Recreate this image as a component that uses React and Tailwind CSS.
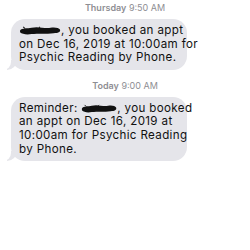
import React from "react";

const Redacted = ({ w }) => (
  <svg width={w} height="9" viewBox="0 0 40 10" className="inline-block align-[-1px]" preserveAspectRatio="none">
    <path d="M1 5 C3 2 8 3 12 2 C18 0 24 3 30 2 C34 1 38 2 39 4 C40 7 37 8 33 8 C26 9 18 8 12 9 C7 10 3 9 1 7 Z" fill="#111" />
    <path d="M4 1 L6 3 M20 1 L19 2" stroke="#111" strokeWidth="1" />
  </svg>
);

const Stamp = ({ day, time }) => (
  <div className="text-center text-[9px] leading-none text-[#8e8e93]">
    <span className="font-semibold">{day}</span> <span>{time}</span>
  </div>
);

const Bubble = ({ lines }) => (
  <div className="relative ml-[11px] w-[176px] rounded-[14px] bg-[#e5e5ea] px-[8px] py-[5px] text-[11.6px] leading-[13.6px] tracking-[0.35px] text-[#111]">
    {lines.map((l, i) => (
      <div key={i} className="whitespace-nowrap">{l}</div>
    ))}
    <div className="absolute -left-[4px] bottom-0 h-[10px] w-[10px] rounded-br-[10px] bg-[#e5e5ea]" />
    <div className="absolute -left-[10px] bottom-0 h-[10px] w-[10px] rounded-br-[8px] bg-white" />
  </div>
);

export default function App() {
  return (
    <div className="h-[250px] w-[250px] overflow-hidden bg-white pt-[3px]" style={{ fontFamily: "Inter, 'Liberation Sans', sans-serif" }}>
      <Stamp day="Thursday" time="9:50 AM" />
      <div className="mt-[7px]">
        <Bubble
          lines={[
            <>
              <Redacted w={42} />, you booked an appt
            </>,
            "on Dec 16, 2019 at 10:00am for",
            "Psychic Reading by Phone.",
          ]}
        />
      </div>
      <div className="mt-[11px]">
        <Stamp day="Today" time="9:00 AM" />
      </div>
      <div className="mt-[7px]">
        <Bubble
          lines={[
            <>
              Reminder: <Redacted w={36} />, you booked
            </>,
            "an appt on Dec 16, 2019 at",
            "10:00am for Psychic Reading",
            "by Phone.",
          ]}
        />
      </div>
    </div>
  );
}
